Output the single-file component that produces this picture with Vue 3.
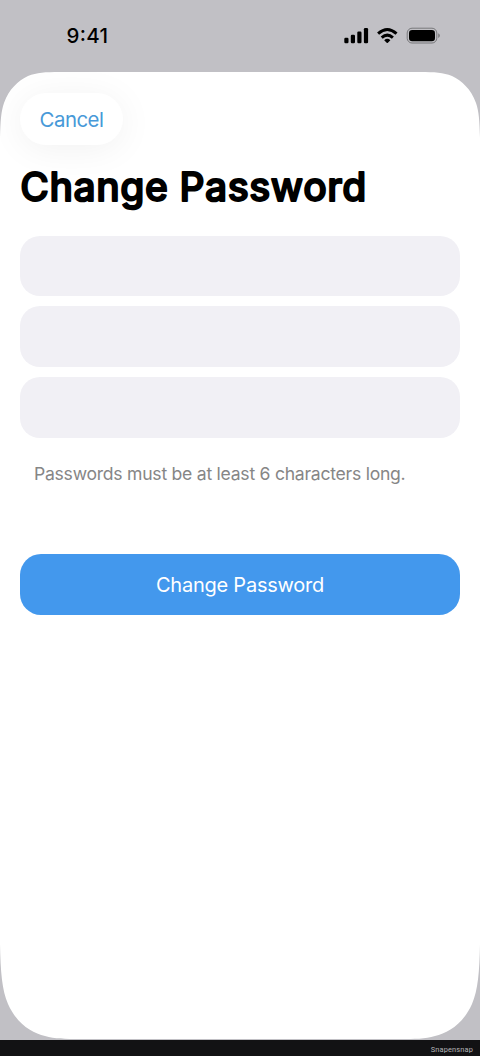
<script setup>
const fields = ['Current password', 'New password', 'Confirm new password']
</script>

<template>
  <div class="screen">
    <header class="status">
      <svg width="480" height="72" viewBox="0 0 480 72">
        <text class="time" x="66.5" y="43" textLength="41.5">9:41</text>
        <rect x="344.3" y="37.7" width="4.2" height="5.5" rx="1.2" />
        <rect x="350.8" y="34.8" width="4.2" height="8.4" rx="1.2" />
        <rect x="357.3" y="31.5" width="4.2" height="11.7" rx="1.2" />
        <rect x="363.9" y="28" width="4.2" height="15.2" rx="1.2" />
        <g fill="none" stroke="#000" stroke-width="3">
          <path d="M378.1 33.7Q387.3 25.4 396.5 33.7" />
          <path d="M381.7 37.6Q387.3 32.7 392.9 37.6" />
        </g>
        <path d="M384.2 40.2Q387.3 37.5 390.4 40.2L387.9 42.8Q387.3 43.4 386.7 42.8Z" />
        <rect x="407.2" y="28.2" width="29.6" height="14.8" rx="4.8" fill="none" stroke="#77777a" />
        <rect x="409" y="30" width="26" height="11.2" rx="3.2" />
        <path d="M438.1 33.2Q440 34 440 35.6Q440 37.2 438.1 38Z" fill="#808083" />
      </svg>
    </header>
    <main class="sheet">
      <svg class="sheet-shape" width="480" height="967" viewBox="0 0 480 967">
        <path d="M0 66C.5 48 1 40 4 31C9 17 18 9 28 4C37 .5 45 0 60 0H420C435 0 443 .5 452 4C462 9 471 17 476 31C479 40 479.500 48 480 66V872C479.500 900 478 918 472 932C463 952 448 961 435 964C425 967 415 967 400 967H80C65 967 55 967 45 964C32 961 17 952 8 932C2 918 .5 900 0 872Z" fill="#fff" />
      </svg>
      <button class="cancel"><span>Cancel</span></button>
      <h1 class="title">
        <svg width="440" height="54" viewBox="0 0 440 54">
          <text x="0.3" y="39" textLength="346">Change Password</text>
        </svg>
      </h1>
      <div class="fields">
        <input v-for="f in fields" :key="f" class="field" type="password" :aria-label="f" />
      </div>
      <p class="hint">Passwords must be at least 6 characters long.</p>
      <button class="submit"><span>Change Password</span></button>
    </main>
    <footer class="footer">Snapensnap</footer>
  </div>
</template>

<style>
body { margin: 0; }
</style>

<style scoped>
.screen {
  width: 480px;
  height: 1056px;
  display: flex;
  flex-direction: column;
  overflow: hidden;
  background: #c1c0c5;
  font-family: Inter, "Liberation Sans", sans-serif;
}
.status { height: 72px; flex: none; }
svg { display: block; }
.time { font-size: 20.5px; font-weight: 550; }
.sheet {
  position: relative;
  height: 968px;
  flex: none;
  box-sizing: border-box;
  padding: 21px 20px 0;
  display: flex;
  flex-direction: column;
  align-items: stretch;
  isolation: isolate;
}
.sheet-shape { position: absolute; inset: 0; z-index: -1; }
button { border: 0; padding: 0; font-family: inherit; }
.cancel {
  width: 103px;
  height: 52px;
  flex: none;
  border-radius: 26px;
  background: #fff;
  color: #4799d8;
  font-size: 20.4px;
  box-shadow: 0 4px 36px rgba(0, 0, 0, 0.06);
}
.cancel span { letter-spacing: -0.5px; }
.title { margin: 17px 0 0; height: 54px; flex: none; }
.title text {
  font-size: 39px;
  font-weight: 500;
  stroke: #000;
  stroke-width: 1.8px;
  stroke-linejoin: round;
}
.fields {
  margin-top: 19.7px;
  display: flex;
  flex-direction: column;
  gap: 10px;
}
.field {
  box-sizing: border-box;
  width: 100%;
  height: 60.7px;
  padding: 0 16px;
  border: 0;
  border-radius: 20px;
  outline: 0;
  background: #f1f0f5;
}
.hint {
  margin: 24px 0 0 14px;
  font-size: 17.6px;
  line-height: 24px;
  letter-spacing: -0.26px;
  color: #868686;
  white-space: nowrap;
}
.submit {
  height: 61px;
  flex: none;
  margin-top: 68.3px;
  border-radius: 21px;
  background: #4398ed;
  color: #fff;
  font-size: 20px;
  letter-spacing: -0.24px;
}
.footer {
  flex: 1;
  box-sizing: border-box;
  padding-right: 7px;
  background: #121214;
  color: #b5b5b7;
  font: 7.4px/19px Roboto, sans-serif;
  letter-spacing: 0.15px;
  text-align: right;
}
</style>
